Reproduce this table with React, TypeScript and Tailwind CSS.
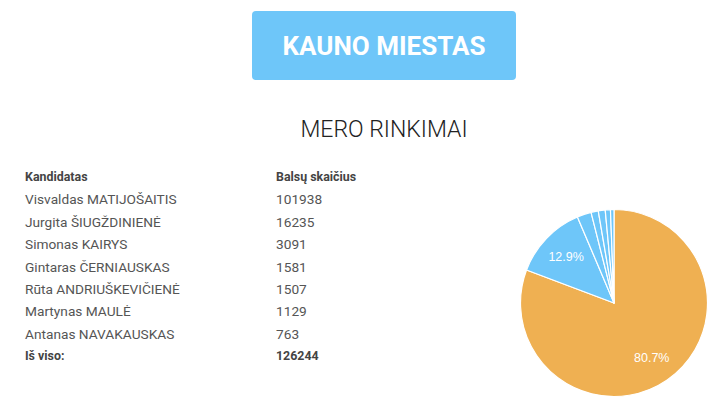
import React from 'react';

const CANDIDATES: [string, number][] = [
  ['Visvaldas MATIJOŠAITIS', 101938],
  ['Jurgita ŠIUGŽDINIENĖ', 16235],
  ['Simonas KAIRYS', 3091],
  ['Gintaras ČERNIAUSKAS', 1581],
  ['Rūta ANDRIUŠKEVIČIENĖ', 1507],
  ['Martynas MAULĖ', 1129],
  ['Antanas NAVAKAUSKAS', 763],
];

const TOTAL = CANDIDATES.reduce((s, c) => s + c[1], 0);

function PieChart() {
  const cx = 95;
  const cy = 95;
  const r = 93.5;
  let start = 0;
  const slices = CANDIDATES.map(([name, votes], i) => {
    const frac = votes / TOTAL;
    const a0 = start * 2 * Math.PI;
    const a1 = (start + frac) * 2 * Math.PI;
    start += frac;
    const x0 = cx + r * Math.sin(a0);
    const y0 = cy - r * Math.cos(a0);
    const x1 = cx + r * Math.sin(a1);
    const y1 = cy - r * Math.cos(a1);
    const large = frac > 0.5 ? 1 : 0;
    const mid = (a0 + a1) / 2;
    const lr = r * 0.71;
    return {
      name,
      d: `M${cx},${cy} L${x0},${y0} A${r},${r} 0 ${large} 1 ${x1},${y1} Z`,
      color: i === 0 ? '#efb052' : '#6ec6f9',
      label: frac > 0.05 ? `${(frac * 100).toFixed(1)}%` : null,
      lx: cx + lr * Math.sin(mid),
      ly: cy - lr * Math.cos(mid),
    };
  });

  return (
    <svg width="190" height="190" viewBox="0 0 190 190">
      {slices.map((s) => (
        <path key={s.name} d={s.d} fill={s.color} stroke="#ffffff" strokeWidth="1.2" strokeLinejoin="round" />
      ))}
      {slices.map((s) =>
        s.label ? (
          <text
            key={s.name + '-label'}
            x={s.lx}
            y={s.ly}
            fill="#ffffff"
            fontSize="12.5"
            textAnchor="middle"
            dominantBaseline="central"
            fontFamily="'Liberation Sans', Arial, sans-serif"
          >
            {s.label}
          </text>
        ) : null
      )}
    </svg>
  );
}

export default function App() {
  return (
    <div className="w-full h-[415px] overflow-hidden bg-white" style={{ fontFamily: 'Roboto, "Noto Sans", sans-serif' }}>
      <div className="w-[768px]">
        <div className="flex flex-col items-center pt-[11px]">
          <div className="w-[264px] h-[69px] rounded-[4px] bg-[#6ec6f9] flex items-center justify-center">
            <span className="text-white font-bold text-[26px] leading-none">KAUNO MIESTAS</span>
          </div>
          <h1 className="mt-[30px] text-[23px] font-light text-[#222222] leading-[40px]">MERO RINKIMAI</h1>
        </div>

        <div className="flex mt-[16px]">
          <div className="pl-[25px] w-[490px] text-[13.7px] text-[#555555]">
            <div className="grid grid-cols-[251px_1fr] leading-[22.4px]">
              <div className="font-bold text-[12.4px] text-[#444444]">Kandidatas</div>
              <div className="font-bold text-[12.4px] text-[#444444]">Balsų skaičius</div>
              {CANDIDATES.map(([name, votes]) => (
                <React.Fragment key={name}>
                  <div>{name}</div>
                  <div>{votes}</div>
                </React.Fragment>
              ))}
              <div className="font-bold text-[12.4px] text-[#444444]">Iš viso:</div>
              <div className="font-bold text-[12.4px] text-[#444444]">{TOTAL}</div>
            </div>
          </div>
          <div className="ml-[29px] mt-[42px]">
            <PieChart />
          </div>
        </div>
      </div>
    </div>
  );
}
